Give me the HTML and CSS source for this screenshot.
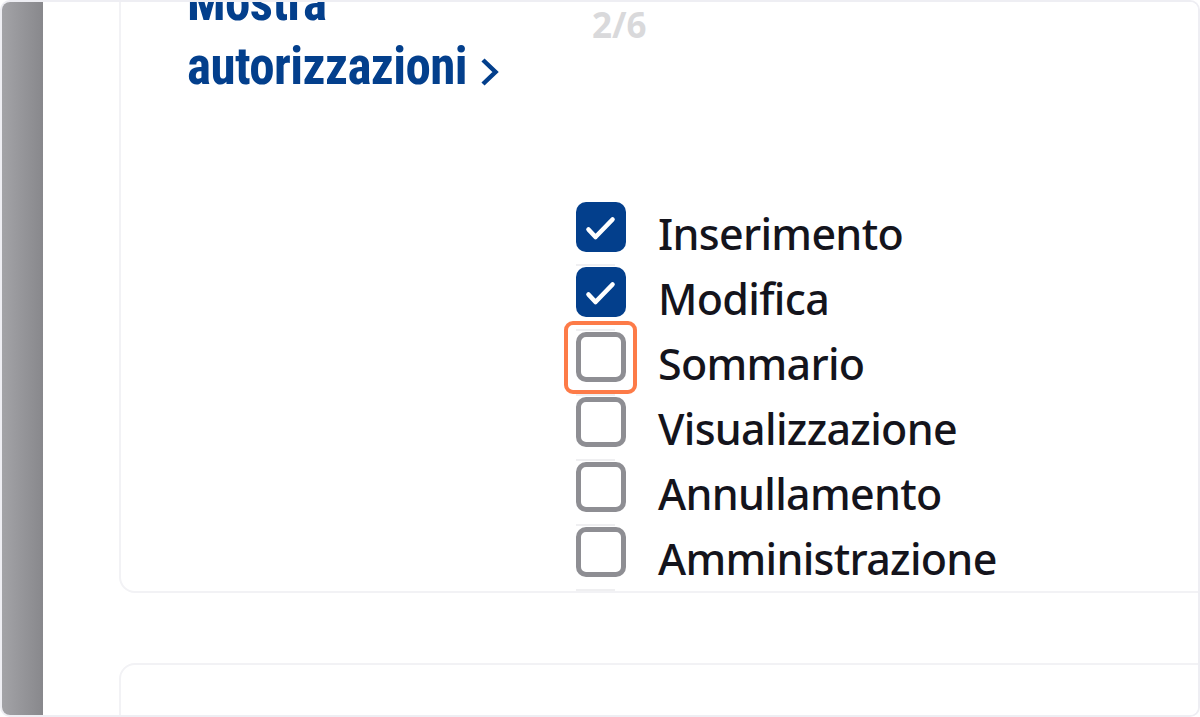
FILE: index.html
```html
<!DOCTYPE html>
<html lang="it">
<head>
<meta charset="utf-8">
<title>Autorizzazioni</title>
<link rel="stylesheet" href="styles.css">
</head>
<body>
<div class="frame">
  <div class="backdrop"></div>
  <main class="content">
    <section class="card card-perms">
      <div class="perm-header">
        <h2 class="perm-title"><span class="perm-title-text">Mostra autorizzazioni</span><svg class="chev" viewBox="0 0 22 32" width="22" height="32" aria-hidden="true"><path d="M4 4 L16.5 16 L4 28" fill="none" stroke="#033f8c" stroke-width="4.5" stroke-linecap="butt" stroke-linejoin="miter"/></svg></h2>
        <span class="perm-count">2/6</span>
      </div>
      <ul class="perm-list">
        <li class="perm-row">
          <div class="box-col"><span class="cb cb-on"><svg viewBox="0 0 50 50" width="50" height="50"><path d="M12.5 27.5 L19.5 35 L36.5 17.5" fill="none" stroke="#fff" stroke-width="4.6" stroke-linecap="round" stroke-linejoin="round"/></svg></span><span class="rule"></span></div>
          <span class="perm-label">Inserimento</span>
        </li>
        <li class="perm-row">
          <div class="box-col"><span class="cb cb-on"><svg viewBox="0 0 50 50" width="50" height="50"><path d="M12.5 27.5 L19.5 35 L36.5 17.5" fill="none" stroke="#fff" stroke-width="4.6" stroke-linecap="round" stroke-linejoin="round"/></svg></span><span class="rule"></span></div>
          <span class="perm-label">Modifica</span>
        </li>
        <li class="perm-row">
          <div class="box-col"><span class="cb cb-off cb-focus"></span><span class="rule"></span></div>
          <span class="perm-label">Sommario</span>
        </li>
        <li class="perm-row">
          <div class="box-col"><span class="cb cb-off"></span><span class="rule"></span></div>
          <span class="perm-label">Visualizzazione</span>
        </li>
        <li class="perm-row">
          <div class="box-col"><span class="cb cb-off"></span><span class="rule"></span></div>
          <span class="perm-label">Annullamento</span>
        </li>
        <li class="perm-row">
          <div class="box-col"><span class="cb cb-off"></span><span class="rule"></span></div>
          <span class="perm-label">Amministrazione</span>
        </li>
      </ul>
    </section>
    <section class="card card-next"></section>
  </main>
</div>
</body>
</html>
```
FILE: styles.css
```css
* { box-sizing: border-box; }
html, body { margin: 0; padding: 0; background: #ffffff; }
.frame {
  width: 1200px;
  height: 717px;
  border: 2px solid #eeeef3;
  border-radius: 10px;
  overflow: hidden;
  display: flex;
  background: #ffffff;
}
.backdrop {
  width: 41px;
  flex: none;
  background: linear-gradient(to right, #a3a3a7, #88888c);
}
.content {
  flex: 1;
  overflow: hidden;
  padding-left: 76px;
  display: flex;
  flex-direction: column;
}
.card {
  border: 2px solid #f2f2f5;
  border-radius: 16px;
  margin-right: -30px;
  background: #ffffff;
  flex: none;
}
.card-perms {
  margin-top: -57px;
  padding: 24px 0 0 66px;
}
.card-next {
  margin-top: 70px;
  height: 220px;
}
.perm-header {
  display: flex;
  align-items: flex-start;
}
.perm-title {
  margin: 0;
  width: 405px;
  padding-right: 40px;
  font-family: "Roboto Condensed", "Roboto", sans-serif;
  font-stretch: 75%;
  font-weight: 700;
  font-size: 51px;
  letter-spacing: -0.6px;
  line-height: 64px;
  color: #033f8c;
}
.chev {
  margin-left: 12px;
  vertical-align: -4px;
}
.perm-count {
  margin-top: 30px;
  font-family: "Noto Sans", sans-serif;
  font-weight: 700;
  font-size: 35px;
  line-height: 48px;
  color: #d9d9db;
}
.perm-list {
  list-style: none;
  margin: 103px 0 0 389px;
  padding: 0;
  display: flex;
  flex-direction: column;
  gap: 1px;
}
.perm-row {
  display: flex;
  align-items: flex-start;
  gap: 32px;
}
.box-col {
  display: flex;
  flex-direction: column;
  width: 50px;
}
.cb {
  position: relative;
  display: block;
  width: 50px;
  height: 50px;
  border-radius: 10px;
}
.cb svg { display: block; }
.cb-on { background: #033f8c; }
.cb-off {
  border: 5px solid #8e8e93;
  background: #ffffff;
}
.cb-focus::after {
  content: "";
  position: absolute;
  left: -17px;
  top: -16px;
  right: -16px;
  bottom: -17px;
  border: 4px solid #fd7b48;
  border-radius: 9px;
}
.rule {
  display: block;
  width: 39px;
  height: 2px;
  margin-top: 12px;
  background: #efeff1;
}
.perm-label {
  font-family: "Noto Sans", sans-serif;
  font-weight: 500;
  font-size: 43px;
  letter-spacing: -0.7px;
  line-height: 64px;
  color: #14141c;
  white-space: nowrap;
}
```
